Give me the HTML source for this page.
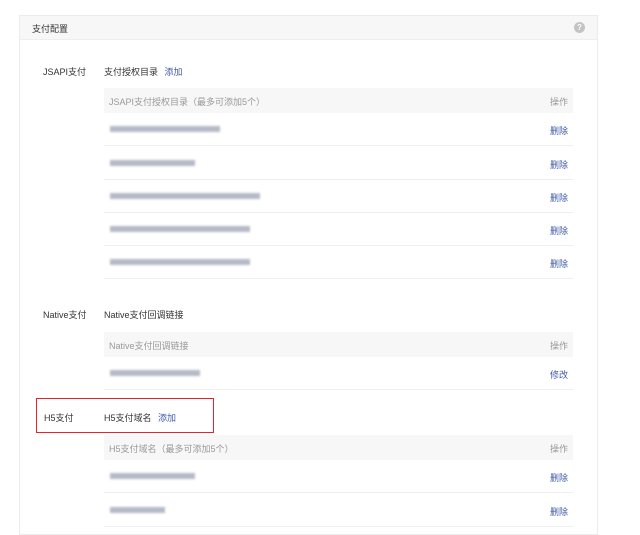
<!DOCTYPE html>
<html><head><meta charset="utf-8"><style>
*{margin:0;padding:0;box-sizing:border-box}
body{width:640px;height:525px;background:#fff;font-family:"Liberation Sans","Noto Sans CJK SC",sans-serif;font-size:9px;color:#333;position:relative;overflow:hidden}
.panel{position:absolute;left:19px;top:15px;width:579px;height:520px;border:1px solid #ececec}
.hd{position:absolute;left:0;top:0;width:100%;height:24px;background:#f7f7f7;border-bottom:1px solid #eee}
.hd span{position:absolute;left:12px;top:6px}
.q{position:absolute;right:12px;top:6px;width:11px;height:11px;border-radius:50%;background:#c4c4c4;color:#fff;font-size:8px;font-weight:bold;text-align:center;line-height:11px}
.a{position:absolute}
.blue{color:#3d5aa8}
.th{position:absolute;left:104px;width:469px;height:25px;background:#f7f7f7;color:#999}
.th span{position:absolute;left:5px;top:7px}
.th b{position:absolute;right:5px;top:7px;font-weight:normal}
.row{position:absolute;left:104px;width:469px;height:33px;border-bottom:1px solid #eee}
.row i{position:absolute;left:6px;top:13px;height:6px;background:#a9adbd;filter:blur(1px);opacity:.85}
.row b{position:absolute;right:5px;top:11px;font-weight:normal;color:#3d5aa8}
</style></head><body>
<div class="panel"><div class="hd"><span>支付配置</span><div class="q">?</div></div></div>
<div class="a" style="left:43px;top:65px">JSAPI支付</div>
<div class="a" style="left:104px;top:65px">支付授权目录 <span class="blue" style="margin-left:4px">添加</span></div>
<div class="th" style="top:88px"><span>JSAPI支付授权目录（最多可添加5个）</span><b>操作</b></div>
<div class="row" style="top:113px"><i style="width:110px"></i><b>删除</b></div>
<div class="row" style="top:147px"><i style="width:85px"></i><b>删除</b></div>
<div class="row" style="top:180px"><i style="width:150px"></i><b>删除</b></div>
<div class="row" style="top:213px"><i style="width:140px"></i><b>删除</b></div>
<div class="row" style="top:246px"><i style="width:140px"></i><b>删除</b></div>
<div class="a" style="left:43px;top:308px">Native支付</div>
<div class="a" style="left:104px;top:308px">Native支付回调链接</div>
<div class="th" style="top:332px"><span>Native支付回调链接</span><b>操作</b></div>
<div class="row" style="top:357px"><i style="width:90px"></i><b>修改</b></div>
<div class="a" style="left:36px;top:398px;width:178px;height:35px;border:1.5px solid #e8232a"></div>
<div class="a" style="left:44px;top:411px">H5支付</div>
<div class="a" style="left:104px;top:411px">H5支付域名 <span class="blue" style="margin-left:4px">添加</span></div>
<div class="th" style="top:435px"><span>H5支付域名（最多可添加5个）</span><b>操作</b></div>
<div class="row" style="top:460px"><i style="width:85px"></i><b>删除</b></div>
<div class="row" style="top:494px"><i style="width:55px"></i><b>删除</b></div>
</body></html>
